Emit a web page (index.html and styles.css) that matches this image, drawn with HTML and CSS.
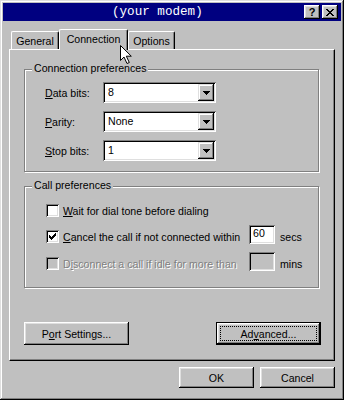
FILE: index.html
```html
<!DOCTYPE html>
<html lang="en">
<head>
  <meta charset="UTF-8">
  <title>(your modem) Properties</title>
  <link rel="stylesheet" href="styles.css">
</head>
<body>

  <div class="window">
    <!-- title bar -->
    <div class="titlebar">
      <span class="title">(your modem)</span>
      <div class="tb-btns">
        <button class="tb-btn">?</button>
        <button class="tb-btn">
          <svg width="8" height="7" viewBox="0 0 8 7"><path d="M0 0h2v1h-2zM6 0h2v1h-2zM1 1h2v1h-2zM5 1h2v1h-2zM2 2h4v1h-4zM3 3h2v1h-2zM2 4h4v1h-4zM1 5h2v1h-2zM5 5h2v1h-2zM0 6h2v1h-2zM6 6h2v1h-2z" fill="#000"/></svg>
        </button>
      </div>
    </div>

    <div class="dlg">
      <!-- tabs -->
      <div class="tabs">
        <div class="tab tab-general">General</div>
        <div class="tab tab-conn">Connection</div>
        <div class="tab tab-options">Options</div>
      </div>

      <div class="panel">
        <!-- connection preferences -->
        <div class="group group-conn">
          <div class="legend">Connection preferences</div>
          <div class="field field-first">
            <label class="field-label"><u>D</u>ata bits:</label>
            <div class="combo"><span class="combo-text">8</span><span class="combo-btn"><svg width="7" height="4" viewBox="0 0 7 4"><path d="M0 0h7v1h-7zM1 1h5v1h-5zM2 2h3v1h-3zM3 3h1v1h-1z" fill="#000"/></svg></span></div>
          </div>
          <div class="field">
            <label class="field-label"><u>P</u>arity:</label>
            <div class="combo"><span class="combo-text">None</span><span class="combo-btn"><svg width="7" height="4" viewBox="0 0 7 4"><path d="M0 0h7v1h-7zM1 1h5v1h-5zM2 2h3v1h-3zM3 3h1v1h-1z" fill="#000"/></svg></span></div>
          </div>
          <div class="field">
            <label class="field-label"><u>S</u>top bits:</label>
            <div class="combo"><span class="combo-text">1</span><span class="combo-btn"><svg width="7" height="4" viewBox="0 0 7 4"><path d="M0 0h7v1h-7zM1 1h5v1h-5zM2 2h3v1h-3zM3 3h1v1h-1z" fill="#000"/></svg></span></div>
          </div>
        </div>

        <!-- call preferences -->
        <div class="group group-call">
          <div class="legend">Call preferences</div>
          <div class="check-row row-1">
            <span class="checkbox"></span>
            <span class="check-label"><u>W</u>ait for dial tone before dialing</span>
          </div>
          <div class="check-row row-2">
            <span class="checkbox">
              <svg width="7" height="7" viewBox="0 0 7 7"><path d="M6 0h1v1h-1zM5 1h2v1h-2zM0 2h1v1h-1zM4 2h3v1h-3zM0 3h2v1h-2zM3 3h3v1h-3zM0 4h5v1h-5zM1 5h3v1h-3zM2 6h1v1h-1z" fill="#000"/></svg>
            </span>
            <span class="check-label check-label-wide"><u>C</u>ancel the call if not connected within</span>
            <span class="edit">60</span>
            <span class="unit">secs</span>
          </div>
          <div class="check-row row-3">
            <span class="checkbox checkbox-off"></span>
            <span class="check-label check-label-wide disabled">D<u>i</u>sconnect a call if idle for more than</span>
            <span class="edit edit-off"></span>
            <span class="unit">mins</span>
          </div>
        </div>

        <div class="panel-btns">
          <button class="btn btn-wide">P<u>o</u>rt Settings...</button>
          <button class="btn btn-wide btn-default"><span class="focus">Ad<u>v</u>anced...</span></button>
        </div>
      </div>

      <div class="dlg-btns">
        <button class="btn btn-dlg">OK</button>
        <button class="btn btn-dlg">Cancel</button>
      </div>
    </div>

    <!-- mouse pointer -->
    <svg class="cursor" width="12" height="20" viewBox="0 0 12 20">
      <path d="M0.5 0.5v15l3.5-3.5 3 6.5 2.3-1-3-6.3h5z" fill="#fff" stroke="#000" stroke-width="1"/>
    </svg>
  </div>

</body>
</html>
```

FILE: styles.css
```css
body {
  margin: 0;
  font-family: "Liberation Sans", Arial, sans-serif;
  font-size: 10.6px;
  color: #000;
  background: #c0c0c0;
}

button {
  font: inherit;
  color: #000;
  border: none;
  padding: 0;
  background: #c0c0c0;
}

.window {
  position: relative;
  width: 344px;
  height: 400px;
  box-sizing: border-box;
  padding: 3px;
  background: #c0c0c0;
  box-shadow: inset -1px -1px #000, inset 1px 1px #dfdfdf, inset -2px -2px #808080, inset 2px 2px #fff;
}

.titlebar {
  display: flex;
  align-items: center;
  height: 18px;
  padding: 0 3px 0 109px;
  background: #000080;
}

.title {
  flex: 1;
  color: #fff;
  font-family: "Liberation Mono", monospace;
  font-size: 12.6px;
}

.tb-btns {
  display: flex;
  gap: 2px;
}

.tb-btn {
  display: flex;
  align-items: center;
  justify-content: center;
  width: 16px;
  height: 14px;
  font-weight: bold;
  font-size: 11px;
  line-height: 14px;
  box-shadow: inset -1px -1px #000, inset 1px 1px #fff, inset -2px -2px #808080, inset 2px 2px #dfdfdf;
}

.dlg {
  padding: 8px 6px 0;
}

/* tabs */
.tabs {
  position: relative;
  z-index: 1;
  display: flex;
  align-items: flex-end;
  height: 20px;
  padding-left: 2px;
}

.tab {
  display: flex;
  align-items: center;
  justify-content: center;
  height: 18px;
  box-sizing: border-box;
  border-left: 1px solid #fff;
  border-top: 1px solid #fff;
  border-right: 1px solid #000;
  border-radius: 2px 2px 0 0;
  box-shadow: inset -1px 0 #808080;
  background: #c0c0c0;
}

.tab-general {
  width: 48px;
}

.tab-conn {
  width: 69px;
  height: 21px;
  margin-bottom: -1px;
  padding-bottom: 2px;
}

.tab-options {
  width: 47px;
}

.panel {
  height: 312px;
  box-sizing: border-box;
  border: 1px solid;
  border-color: #fff #000 #000 #fff;
  box-shadow: inset -1px -1px #808080;
  padding: 19px 13px 0 14px;
}

/* group boxes */
.group {
  width: 295px;
  box-sizing: border-box;
  border: 1px solid #808080;
  box-shadow: inset 1px 1px #fff, 1px 1px #fff;
}

.group-conn {
  height: 103px;
}

.group-call {
  height: 102px;
  margin-top: 14px;
}

.legend {
  width: fit-content;
  margin: -8px 0 0 7px;
  padding: 0 2px;
  line-height: 13px;
  background: #c0c0c0;
}

.field {
  display: flex;
  align-items: center;
  height: 21px;
  padding-left: 20px;
  margin-top: 8px;
}

.field-first {
  margin-top: 7px;
}

.field-label {
  width: 58px;
}

.combo {
  display: flex;
  align-items: stretch;
  width: 113px;
  height: 21px;
  box-sizing: border-box;
  padding: 2px;
  background: #fff;
  box-shadow: inset 1px 1px #808080, inset -1px -1px #fff, inset 2px 2px #000, inset -2px -2px #dfdfdf;
}

.combo-text {
  flex: 1;
  padding-left: 3px;
  line-height: 17px;
}

.combo-btn {
  display: flex;
  align-items: center;
  justify-content: center;
  width: 16px;
  background: #c0c0c0;
  box-shadow: inset -1px -1px #000, inset 1px 1px #dfdfdf, inset -2px -2px #808080, inset 2px 2px #fff;
}

/* checkboxes */
.check-row {
  display: flex;
  align-items: center;
  height: 19px;
  padding-left: 21px;
}

.row-1 {
  margin-top: 9px;
}

.row-2 {
  margin-top: 7px;
}

.row-3 {
  margin-top: 8px;
}

.checkbox {
  display: flex;
  align-items: center;
  justify-content: center;
  flex: none;
  width: 13px;
  height: 13px;
  box-sizing: border-box;
  background: #fff;
  box-shadow: inset 1px 1px #808080, inset -1px -1px #fff, inset 2px 2px #000, inset -2px -2px #dfdfdf;
}

.checkbox-off {
  background: #c0c0c0;
}

.check-label {
  margin-left: 4px;
}

.check-label-wide {
  width: 186px;
  flex: none;
}

.disabled {
  color: #808080;
  text-shadow: 1px 1px 0 #fff;
}

.edit {
  width: 26px;
  height: 19px;
  margin-top: -4px;
  box-sizing: border-box;
  padding: 2px 0 0 4px;
  line-height: 13px;
  background: #fff;
  box-shadow: inset 1px 1px #808080, inset -1px -1px #fff, inset 2px 2px #000, inset -2px -2px #dfdfdf;
}

.edit-off {
  background: #c0c0c0;
}

.unit {
  margin-left: 5px;
}

/* buttons */
.btn {
  box-sizing: border-box;
  box-shadow: inset -1px -1px #000, inset 1px 1px #fff, inset -2px -2px #808080, inset 2px 2px #dfdfdf;
}

.btn-wide {
  width: 105px;
  height: 23px;
}

.btn-default {
  display: flex;
  padding: 4px;
  box-shadow: inset 0 0 0 1px #000, inset -2px -2px #000, inset 2px 2px #fff, inset -3px -3px #808080, inset 3px 3px #dfdfdf;
}

.focus {
  flex: 1;
  display: flex;
  align-items: center;
  justify-content: center;
  border: 1px dotted #000;
}

.panel-btns {
  display: flex;
  justify-content: space-between;
  width: 297px;
  margin-top: 34px;
}

.dlg-btns {
  display: flex;
  justify-content: flex-end;
  gap: 6px;
  margin-top: 6px;
}

.btn-dlg {
  width: 75px;
  height: 21px;
}

.cursor {
  position: absolute;
  left: 120px;
  top: 45px;
  z-index: 2;
}
```
